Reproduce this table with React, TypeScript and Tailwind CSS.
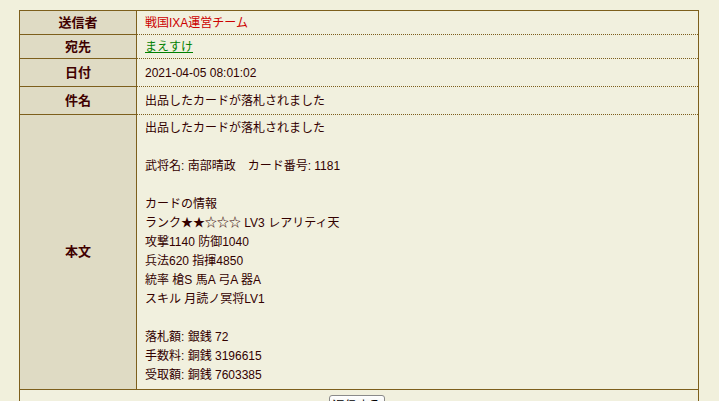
import React from "react";

const font = { fontFamily: '"Liberation Sans", "Noto Sans CJK JP", sans-serif' };

function Row({ label, children, h }: { label: string; children: React.ReactNode; h: string }) {
  return (
    <>
      <div className={`${h} flex items-center justify-center bg-[#dfdbc4] border-b border-r border-[#7d5f1c] text-[13px] font-bold text-[#3f0000]`}>
        {label}
      </div>
      <div className={`${h} flex items-center pl-2 bg-[#f1f0de] border-b border-dotted border-[#7d5f1c] text-[12px] text-[#330000]`}>
        {children}
      </div>
    </>
  );
}

const body = [
  "出品したカードが落札されました",
  "",
  "武将名: 南部晴政　カード番号: 1181",
  "",
  "カードの情報",
  "ランク★★☆☆☆ LV3 レアリティ天",
  "攻撃1140 防御1040",
  "兵法620 指揮4850",
  "統率 槍S 馬A 弓A 器A",
  "スキル 月読ノ冥将LV1",
  "",
  "落札額: 銀銭 72",
  "手数料: 銅銭 3196615",
  "受取額: 銅銭 7603385",
];

export default function App() {
  return (
    <div className="w-[719px] h-[401px] overflow-hidden bg-[#f1f0dc] pt-[10px] pl-[19px]" style={font}>
      <div className="w-[680px] border-t border-l border-r border-[#7d5f1c]">
        <div className="grid grid-cols-[117px_1fr]">
          <Row label="送信者" h="h-[24px]">
            <span className="text-[#cc0000]">戦国IXA運営チーム</span>
          </Row>
          <Row label="宛先" h="h-[24px]">
            <span className="text-[#008000] underline">まえすけ</span>
          </Row>
          <Row label="日付" h="h-[28px]">
            <span>2021-04-05 08:01:02</span>
          </Row>
          <Row label="件名" h="h-[28px]">
            <span>出品したカードが落札されました</span>
          </Row>
          <div className="flex items-center justify-center bg-[#dfdbc4] border-b border-r border-[#7d5f1c] text-[13px] font-bold text-[#3f0000]">
            本文
          </div>
          <div className="bg-[#f1f0de] border-b border-[#7d5f1c] pl-2 py-1 text-[12px] leading-[19px] text-[#330000]">
            {body.map((l, i) => (
              <div key={i} className="h-[19px] whitespace-pre">{l}</div>
            ))}
          </div>
        </div>
        <div className="bg-[#f1f0de] flex justify-center pt-[5px] pb-2 pr-[5px]">
          <button className="w-[56px] h-[22px] rounded-[3px] border border-[#8a8a8a] bg-gradient-to-b from-[#ffffff] to-[#e6e6e0] text-[12px] text-black leading-none">
            返信する
          </button>
        </div>
      </div>
    </div>
  );
}
